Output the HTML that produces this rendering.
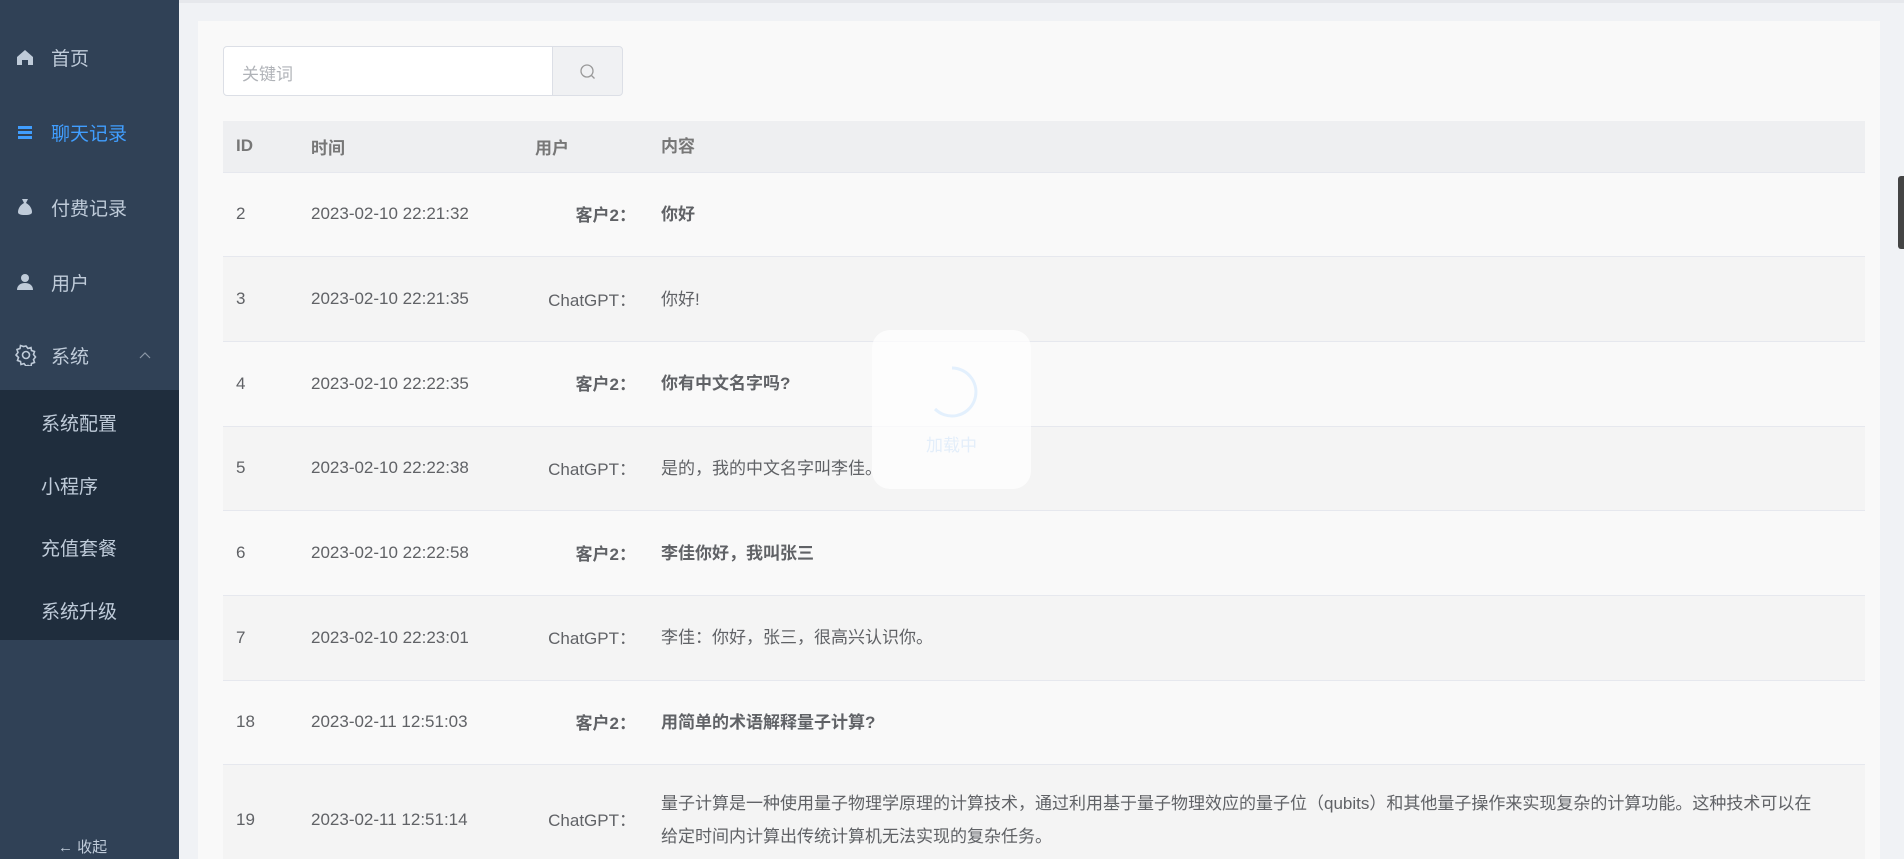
<!DOCTYPE html>
<html><head><meta charset="utf-8"><style>
*{margin:0;padding:0;box-sizing:border-box}
html,body{width:1904px;height:859px;overflow:hidden}
body{background:#f0f2f5;font-family:"Liberation Sans","Noto Sans CJK SC",sans-serif;position:relative}
.side{position:absolute;left:0;top:0;width:179px;height:859px;background:#304156}
.mi{position:absolute;left:0;width:179px;height:40px;display:flex;align-items:center;color:#bfcbd9;font-size:19px}
.mi svg{position:absolute;left:15px}
.mi span{position:absolute;left:51px}
.sub{position:absolute;left:0;top:390px;width:179px;height:250px;background:#1f2d3d}
.si{position:absolute;left:41px;color:#bfcbd9;font-size:19px}
.card{position:absolute;left:198px;top:21px;width:1682px;height:838px;background:#f9f9f9}
.inp{position:absolute;left:223px;top:46px;width:330px;height:50px;border:1px solid #dcdfe6;border-radius:4px 0 0 4px;background:#fff;color:#b0b3b8;font-size:17px;padding:13px 18px}
.btn{position:absolute;left:552px;top:46px;width:71px;height:50px;border:1px solid #dcdfe6;border-radius:0 4px 4px 0;background:#f0f1f3}
table{position:absolute;left:223px;top:121px;width:1642px;border-collapse:collapse;table-layout:fixed;font-size:17px;color:#606266}
th{height:51px;background:#eeeff1;color:#777;font-weight:bold;text-align:left;border-bottom:1px solid #e6e8ee}
td{height:84.7px;border-bottom:1px solid #e6e8ee}
tr:nth-child(odd) td{background:#f4f4f4}
.c1{padding-left:13px;width:88px}
.c2{width:190px}
.c3{width:126px;text-align:right;padding-right:0}
.c3 span{position:relative;left:9px;top:-1px}
.c4{padding-left:34px;padding-right:44px;line-height:33px}
.b{font-weight:bold}
.load{position:absolute;left:872px;top:330px;width:159px;height:159px;border-radius:18px;background:rgba(255,255,255,.7)}
</style></head><body>
<div class="side">
 <div class="mi" style="top:37px"><svg width="20" height="20" viewBox="0 0 20 20"><path d="M2 10L10 3l8 7v8h-5v-5H7v5H2z" fill="#bfcbd9"/></svg><span>首页</span></div>
 <div class="mi" style="top:112px;color:#409eff"><svg width="20" height="20" viewBox="0 0 20 20"><rect x="3" y="4" width="14" height="3" fill="#409eff"/><rect x="3" y="9" width="14" height="3" fill="#409eff"/><rect x="3" y="14" width="14" height="3" fill="#409eff"/></svg><span>聊天记录</span></div>
 <div class="mi" style="top:187px"><svg width="20" height="20" viewBox="0 0 20 20"><path d="M7 2h6l-2 4h-2zM9 6h2c4 2 6 6 6 9 0 2-2 3-7 3s-7-1-7-3c0-3 2-7 6-9z" fill="#bfcbd9"/></svg><span>付费记录</span></div>
 <div class="mi" style="top:262px"><svg width="20" height="20" viewBox="0 0 20 20"><circle cx="10" cy="6" r="4" fill="#bfcbd9"/><path d="M2 18c0-5 4-7 8-7s8 2 8 7z" fill="#bfcbd9"/></svg><span>用户</span></div>
 <div class="mi" style="top:335px"><svg width="22" height="22" viewBox="0 0 22 22"><path d="M11 2l2 2.5 3-1 .5 3 3 1-1 3 2 2.5-2 2.5 1 3-3 1-.5 3-3-1L11 22l-2-2.5-3 1-.5-3-3-1 1-3L1 11l2-2.5-1-3 3-1 .5-3 3 1z" fill="none" stroke="#bfcbd9" stroke-width="1.6"/><circle cx="11" cy="11" r="3.5" fill="none" stroke="#bfcbd9" stroke-width="1.6"/></svg><span>系统</span><svg style="left:139px" width="12" height="8" viewBox="0 0 12 8"><path d="M1 7l5-5 5 5" fill="none" stroke="#8a96a5" stroke-width="1.2"/></svg></div>
 <div class="sub">
  <div class="si" style="top:19px">系统配置</div>
  <div class="si" style="top:82px">小程序</div>
  <div class="si" style="top:144px">充值套餐</div>
  <div class="si" style="top:207px">系统升级</div>
 </div>
 <div style="position:absolute;left:58px;top:836px;color:#bfcbd9;font-size:15px">← 收起</div>
</div>
<div style="position:absolute;left:179px;top:0;width:1725px;height:3px;background:#e6e8ec"></div>
<div class="card"></div>
<div class="inp">关键词</div>
<div class="btn"><svg style="position:absolute;left:26px;top:16px" width="18" height="18" viewBox="0 0 18 18"><circle cx="8" cy="8" r="6" fill="none" stroke="#999" stroke-width="1.3"/><path d="M12.5 12.5l3 3" stroke="#999" stroke-width="1.3"/></svg></div>
<table>
<colgroup><col style="width:88px"><col style="width:190px"><col style="width:126px"><col></colgroup>
<tr><th class="c1">ID</th><th class="c2">时间</th><th class="c3" style="text-align:left;padding-left:34px">用户</th><th class="c4">内容</th></tr>
<tr><td class="c1">2</td><td class="c2">2023-02-10 22:21:32</td><td class="c3 b"><span>客户2：</span></td><td class="c4 b">你好</td></tr>
<tr><td class="c1">3</td><td class="c2">2023-02-10 22:21:35</td><td class="c3"><span>ChatGPT：</span></td><td class="c4">你好!</td></tr>
<tr><td class="c1">4</td><td class="c2">2023-02-10 22:22:35</td><td class="c3 b"><span>客户2：</span></td><td class="c4 b">你有中文名字吗?</td></tr>
<tr><td class="c1">5</td><td class="c2">2023-02-10 22:22:38</td><td class="c3"><span>ChatGPT：</span></td><td class="c4">是的，我的中文名字叫李佳。</td></tr>
<tr><td class="c1">6</td><td class="c2">2023-02-10 22:22:58</td><td class="c3 b"><span>客户2：</span></td><td class="c4 b">李佳你好，我叫张三</td></tr>
<tr><td class="c1">7</td><td class="c2">2023-02-10 22:23:01</td><td class="c3"><span>ChatGPT：</span></td><td class="c4">李佳：你好，张三，很高兴认识你。</td></tr>
<tr><td class="c1">18</td><td class="c2">2023-02-11 12:51:03</td><td class="c3 b"><span>客户2：</span></td><td class="c4 b">用简单的术语解释量子计算?</td></tr>
<tr><td class="c1" style="height:110px">19</td><td class="c2">2023-02-11 12:51:14</td><td class="c3"><span>ChatGPT：</span></td><td class="c4">量子计算是一种使用量子物理学原理的计算技术，通过利用基于量子物理效应的量子位（qubits）和其他量子操作来实现复杂的计算功能。这种技术可以在给定时间内计算出传统计算机无法实现的复杂任务。</td></tr>
</table>
<div class="load"><svg style="position:absolute;left:54px;top:36px" width="52" height="52" viewBox="0 0 52 52"><path d="M26 2a24 24 0 1 1-17 41" fill="none" stroke="#e3f0fd" stroke-width="3"/></svg><div style="position:absolute;top:101px;width:159px;text-align:center;color:#e3eefa;font-size:17px">加载中</div></div>
<div style="position:absolute;left:1898px;top:176px;width:6px;height:73px;background:#444;border-radius:3px 0 0 3px"></div>
</body></html>
